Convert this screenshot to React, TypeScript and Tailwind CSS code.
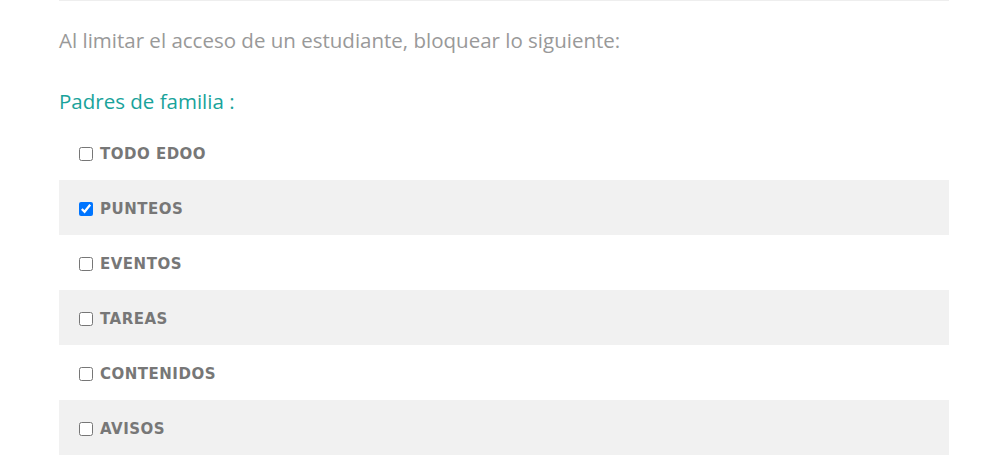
const items = [
  { label: 'TODO EDOO', checked: false },
  { label: 'PUNTEOS', checked: true },
  { label: 'EVENTOS', checked: false },
  { label: 'TAREAS', checked: false },
  { label: 'CONTENIDOS', checked: false },
  { label: 'AVISOS', checked: false },
];

export default function App() {
  return (
    <main className="min-h-[474px] bg-white font-['Open_Sans',sans-serif]">
      <div className="ml-[59px] w-[890px] border-t border-[#eeeeee]">
        <p className="mt-[25px] h-[28px] text-[20.5px] leading-[28px] text-[#999999]">
          Al limitar el acceso de un estudiante, bloquear lo siguiente:
        </p>
        <h3 className="mt-[33px] h-[28px] text-[20.5px] leading-[28px] text-[#19a39b]">Padres de familia :</h3>
        <ul className="mt-[10px]">
          {items.map((it, i) => (
            <li
              key={it.label}
              className={`flex h-[55px] items-center pl-[20px] pt-[3px] ${i % 2 === 1 ? 'bg-[#f1f1f1]' : ''}`}
            >
              <input type="checkbox" defaultChecked={it.checked} className="m-0 h-[14px] w-[14px]" />
              <span className="ml-[7px] font-['DejaVu_Sans',sans-serif] text-[15px] font-bold tracking-[0.5px] text-[#777777]">
                {it.label}
              </span>
            </li>
          ))}
        </ul>
      </div>
    </main>
  );
}
